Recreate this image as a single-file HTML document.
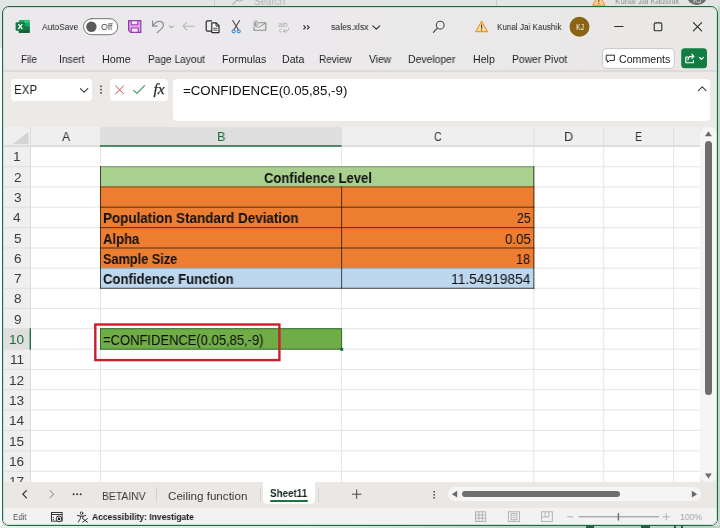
<!DOCTYPE html>
<html lang="en"><head><meta charset="utf-8"><title>sales.xlsx - Excel</title>
<style>
html,body{margin:0;padding:0;}
body{width:720px;height:528px;position:relative;overflow:hidden;background:#e3e4e4;font-family:"Liberation Sans",sans-serif;}
.a{position:absolute;display:block;}
.t{will-change:transform;position:absolute;display:block;white-space:nowrap;line-height:20px;height:20px;transform-origin:0 50%;z-index:5;}
svg{position:absolute;overflow:visible;}
#bgwin{position:absolute;left:0;top:0;width:720px;height:528px;overflow:hidden;}
#win{position:absolute;left:2px;top:6px;width:714px;height:518px;border:1px solid #206642;border-radius:7px;background:linear-gradient(90deg,#ece9ed 0,#ebe9eb 45%,#e9e8e6 100%);overflow:hidden;}
.gl{position:absolute;background:#e5e5e5;}
.cellb{position:absolute;box-sizing:border-box;}
#halo{position:absolute;left:2px;top:6px;width:714px;height:518px;border:1px solid transparent;border-radius:7px;box-shadow:inset 0 0 0 1px rgba(165,222,192,.6);z-index:9;pointer-events:none;}

</style></head>
<body>
<div id="bgwin">
<div class="a" style="left:687.3px;top:-14.4px;width:19.6px;height:19.8px;border-radius:10px;background:#6e6e6e"></div>
<span class="t" id="t57" style="left:254.30px;top:-9.40px;font-size:11.5px;font-weight:400;color:#b2b2b2;transform:scaleX(0.8518);z-index:0;">Search</span>
<span class="t" id="t58" style="left:615.00px;top:-8.80px;font-size:9.6px;font-weight:400;color:#909090;transform:scaleX(0.8435);z-index:0;">Kunal Jai Kaushik</span>
<span class="t" id="t59" style="left:693.00px;top:-9.10px;font-size:8.2px;font-weight:400;color:#e0e0e0;transform:scaleX(0.8984);z-index:0;">KJ</span>
</div>
<div class="a" style="left:0;top:48px;width:2px;height:480px;background:#fdfdfd"></div>
<div class="a" style="left:718px;top:6px;width:2px;height:522px;background:#c6d8c9"></div>
<div class="a" style="left:0;top:526px;width:720px;height:2px;background:linear-gradient(90deg,#e9ece9 0,#e4e9e4 40%,#bfd1c2 75%,#bfd1c2 100%)"></div>
<div class="a" style="left:586px;top:526px;width:8px;height:2px;background:#2c5a3c"></div>
<div class="a" style="left:641px;top:526px;width:9px;height:2px;background:#2c5a3c"></div>
<div class="a" style="left:674px;top:526px;width:2px;height:2px;background:#2c5a3c"></div>
<div class="a" style="left:681px;top:526px;width:2px;height:2px;background:#2c5a3c"></div>
<svg style="left:0;top:0" width="720" height="8" viewBox="0 0 720 8"><path d="M598.8 -6 L605 5.2 H592.6 Z" fill="#f6d28a" stroke="#dd9a3c" stroke-width="1"/><path d="M598.8 -2 V2" stroke="#555" stroke-width="1.1"/><circle cx="598.8" cy="3.6" r="0.6" fill="#555"/></svg>
<svg style="left:0;top:0" width="720" height="8" viewBox="0 0 720 8" fill="none"><path d="M232.6 4.6 L237 0.2" stroke="#b0b0b0" stroke-width="1.1"/><circle cx="239.6" cy="-2.4" r="3.6" stroke="#b0b0b0" stroke-width="1"/></svg>
<div class="a" style="left:214px;top:0;width:1px;height:6px;background:#cdcdcd"></div>
<div class="a" style="left:496px;top:0;width:1px;height:6px;background:#cdcdcd"></div>
<div id="win">
  <!-- ribbon / formula zone backgrounds (coords relative to win: subtract 3,7) -->
  <div class="a" style="left:0;top:64px;width:714px;height:57px;background:#ece9e7"></div>
  <div class="a" style="left:0;top:63px;width:714px;height:2px;background:#dddadb"></div>
  <div class="a" style="left:0;top:475px;width:714px;height:27px;background:#ebe7e5"></div>
  <div class="a" style="left:0;top:502px;width:714px;height:17px;background:#f3f2f2"></div>
</div>
<!-- everything below in page coordinates -->
<!-- name box, fx box, formula input -->
<div class="a" style="left:10.5px;top:79px;width:81.5px;height:22px;background:#fff;border-radius:4px"></div>
<div class="a" style="left:109.5px;top:79px;width:58.5px;height:22px;background:#fff;border-radius:4px"></div>
<div class="a" style="left:173px;top:78.5px;width:537px;height:42.8px;background:#fff;border-radius:4px"></div>
<!-- grid -->
<div id="grid" class="a" style="left:3px;top:127px;width:697px;height:355px;background:#fff;overflow:hidden">
</div>
<svg style="left:0;top:0;z-index:1" width="720" height="528" viewBox="0 0 720 528" shape-rendering="auto">
<rect x="3" y="127" width="697" height="19.6" fill="#efefef"/>
<rect x="3" y="127" width="27.5" height="355" fill="#efefef"/>
<rect x="101.0" y="127" width="240.60" height="19.2" fill="#dfdfdf"/>
<rect x="3" y="329.20" width="27" height="19.50" fill="#dfdfdf"/>
<rect x="3" y="145.60" width="697" height="1" fill="#cbcbcb"/>
<rect x="30.0" y="127" width="1" height="355" fill="#dadada"/>
<rect x="100.00" y="128" width="1" height="18" fill="#dedede"/>
<rect x="341.10" y="128" width="1" height="18" fill="#dedede"/>
<rect x="533.30" y="128" width="1" height="18" fill="#dedede"/>
<rect x="603.20" y="128" width="1" height="18" fill="#dedede"/>
<rect x="673.10" y="128" width="1" height="18" fill="#dedede"/>
<path d="M28.5 131.8 V144.2 H12.4 Z" fill="#d4d4d4"/>
<rect x="100.00" y="147" width="1" height="335" fill="#e5e5e5"/>
<rect x="341.10" y="147" width="1" height="335" fill="#e5e5e5"/>
<rect x="533.30" y="147" width="1" height="335" fill="#e5e5e5"/>
<rect x="603.20" y="147" width="1" height="335" fill="#e5e5e5"/>
<rect x="673.10" y="147" width="1" height="335" fill="#e5e5e5"/>
<rect x="31" y="166.25" width="669" height="1" fill="#e5e5e5"/>
<rect x="3" y="166.25" width="27.5" height="1" fill="#dfdfdf"/>
<rect x="31" y="186.40" width="669" height="1" fill="#e5e5e5"/>
<rect x="3" y="186.40" width="27.5" height="1" fill="#dfdfdf"/>
<rect x="31" y="206.70" width="669" height="1" fill="#e5e5e5"/>
<rect x="3" y="206.70" width="27.5" height="1" fill="#dfdfdf"/>
<rect x="31" y="227.15" width="669" height="1" fill="#e5e5e5"/>
<rect x="3" y="227.15" width="27.5" height="1" fill="#dfdfdf"/>
<rect x="31" y="247.50" width="669" height="1" fill="#e5e5e5"/>
<rect x="3" y="247.50" width="27.5" height="1" fill="#dfdfdf"/>
<rect x="31" y="267.65" width="669" height="1" fill="#e5e5e5"/>
<rect x="3" y="267.65" width="27.5" height="1" fill="#dfdfdf"/>
<rect x="31" y="287.75" width="669" height="1" fill="#e5e5e5"/>
<rect x="3" y="287.75" width="27.5" height="1" fill="#dfdfdf"/>
<rect x="31" y="308.05" width="669" height="1" fill="#e5e5e5"/>
<rect x="3" y="308.05" width="27.5" height="1" fill="#dfdfdf"/>
<rect x="31" y="328.20" width="669" height="1" fill="#e5e5e5"/>
<rect x="3" y="328.20" width="27.5" height="1" fill="#dfdfdf"/>
<rect x="31" y="348.70" width="669" height="1" fill="#e5e5e5"/>
<rect x="3" y="348.70" width="27.5" height="1" fill="#dfdfdf"/>
<rect x="31" y="368.95" width="669" height="1" fill="#e5e5e5"/>
<rect x="3" y="368.95" width="27.5" height="1" fill="#dfdfdf"/>
<rect x="31" y="389.20" width="669" height="1" fill="#e5e5e5"/>
<rect x="3" y="389.20" width="27.5" height="1" fill="#dfdfdf"/>
<rect x="31" y="409.50" width="669" height="1" fill="#e5e5e5"/>
<rect x="3" y="409.50" width="27.5" height="1" fill="#dfdfdf"/>
<rect x="31" y="429.85" width="669" height="1" fill="#e5e5e5"/>
<rect x="3" y="429.85" width="27.5" height="1" fill="#dfdfdf"/>
<rect x="31" y="450.30" width="669" height="1" fill="#e5e5e5"/>
<rect x="3" y="450.30" width="27.5" height="1" fill="#dfdfdf"/>
<rect x="31" y="470.80" width="669" height="1" fill="#e5e5e5"/>
<rect x="3" y="470.80" width="27.5" height="1" fill="#dfdfdf"/>
<rect x="100.00" y="145.25" width="241.60" height="1.45" fill="#1f6a40"/>
<rect x="29.60" y="328.20" width="1.4" height="21.50" fill="#1f7145"/>
<rect x="100.00" y="166.25" width="434.30" height="21.15" fill="#a9d08e"/>
<rect x="100.00" y="186.40" width="434.30" height="21.30" fill="#ed7d31"/>
<rect x="100.00" y="206.70" width="434.30" height="21.45" fill="#ed7d31"/>
<rect x="100.00" y="227.15" width="434.30" height="21.35" fill="#ed7d31"/>
<rect x="100.00" y="247.50" width="434.30" height="21.15" fill="#ed7d31"/>
<rect x="100.00" y="267.65" width="434.30" height="21.10" fill="#bdd7ee"/>
<rect x="100.00" y="166.25" width="434.30" height="1" fill="rgba(70,85,60,.5)"/>
<rect x="100.00" y="186.40" width="434.30" height="1" fill="rgba(60,40,20,.62)"/>
<rect x="100.00" y="206.70" width="434.30" height="1" fill="rgba(35,25,15,.78)"/>
<rect x="100.00" y="227.15" width="434.30" height="1" fill="rgba(35,25,15,.78)"/>
<rect x="100.00" y="247.50" width="434.30" height="1" fill="rgba(35,25,15,.78)"/>
<rect x="100.00" y="267.65" width="434.30" height="1" fill="rgba(70,55,40,.4)"/>
<rect x="100.00" y="287.75" width="434.30" height="1" fill="rgba(30,30,30,.8)"/>
<rect x="100.00" y="166.25" width="1" height="122.50" fill="rgba(35,25,15,.78)"/>
<rect x="533.30" y="166.25" width="1" height="122.50" fill="rgba(35,25,15,.78)"/>
<rect x="341.10" y="186.40" width="1" height="102.35" fill="rgba(35,25,15,.78)"/>
<rect x="100.50" y="328.70" width="241.10" height="20.50" fill="#70ad47" stroke="#2f6b30" stroke-width="1"/>
<rect x="340.20" y="347.80" width="3" height="3" fill="#1f6a3a"/>
<rect x="95.3" y="324.5" width="184.1" height="35.6" fill="none" stroke="#c9202f" stroke-width="2.4"/>
</svg>
<div id="halo"></div>
<svg style="left:0;top:0;z-index:4" width="720" height="528" viewBox="0 0 720 528" fill="none" stroke-linecap="round" stroke-linejoin="round">
  <!-- Excel logo -->
  <rect x="18.8" y="19.9" width="10.9" height="13" rx="1.2" fill="#21a366" stroke="none"/>
  <rect x="24.2" y="19.9" width="5.5" height="3.3" fill="#33c481" stroke="none"/>
  <rect x="24.2" y="23.2" width="5.5" height="3.2" fill="#21a366" stroke="none"/>
  <rect x="24.2" y="26.4" width="5.5" height="3.2" fill="#107c41" stroke="none"/>
  <rect x="18.8" y="26.4" width="5.4" height="3.2" fill="#185c37" stroke="none"/>
  <rect x="18.8" y="29.6" width="10.9" height="3.3" fill="#185c37" stroke="none"/>
  <rect x="15.6" y="22.3" width="9.4" height="8.5" rx="1" fill="#107c41" stroke="none"/>
  <path d="M18.3 24.1 L22.3 29 M22.3 24.1 L18.3 29" stroke="#fff" stroke-width="1.25" stroke-linecap="butt"/>
  <!-- autosave toggle -->
  <rect x="83.5" y="18.7" width="34.2" height="16" rx="8" fill="#fff" stroke="#646464" stroke-width="0.9"/>
  <circle cx="91.4" cy="26.7" r="5.2" fill="#5a5a5a" stroke="none"/>
  <!-- save -->
  <path d="M128.6 20.6 H140.8 V32.4 H130.6 L128.6 30.4 Z" fill="#dfa9e8" stroke="#9236ab" stroke-width="1.2"/>
  <rect x="131.2" y="20.6" width="6.6" height="4.2" fill="#f4e4f7" stroke="#9a3db3" stroke-width="1.1"/>
  <rect x="131.2" y="28" width="7" height="4.4" fill="#f4e4f7" stroke="#9a3db3" stroke-width="1.1"/>
  <!-- undo -->
  <path d="M152.6 21.2 V26 H157.4 M152.8 25.8 C155 22.6 158.4 20.6 161.2 21.6 C164.2 22.8 164 26.4 161.6 28.6 L157.2 32.6" stroke="#8d8d8d" stroke-width="1.25"/>
  <path d="M169.4 25.8 L171.4 27.8 L173.4 25.8" stroke="#a8a8a8" stroke-width="1.05"/>
  <!-- redo (disabled arrow) -->
  <path d="M194.6 26.2 H183 M186.8 22.4 L183 26.2 L186.8 30" stroke="#b9b9b9" stroke-width="1.1"/>
  <!-- copy/paste -->
  <path d="M211.2 31.2 H207.4 C206.6 31.2 206.2 30.8 206.2 30 V22 C206.2 21.2 206.6 20.8 207.4 20.8 H211.6" stroke="#2b2b2b" stroke-width="1.2"/>
  <path d="M211.8 22.9 H216.2 L219 25.7 V32.6 H211.8 Z" fill="#fff" stroke="#2b2b2b" stroke-width="1.2"/>
  <path d="M216 23 V26 H219" stroke="#2b2b2b" stroke-width="1"/>
  <path d="M213.6 28.2 H217.2 M213.6 30.2 H217.2" stroke="#2b2b2b" stroke-width="0.9"/>
  <!-- scissors -->
  <path d="M232.7 20.5 L238.5 30 M239.6 20.5 L233.8 30" stroke="#4a4a4a" stroke-width="1.1"/>
  <circle cx="233.6" cy="31.3" r="1.55" stroke="#3a96dd" stroke-width="1.15"/>
  <circle cx="238.7" cy="31.3" r="1.55" stroke="#3a96dd" stroke-width="1.15"/>
  <!-- mail attach -->
  <path d="M258.8 22.8 H265.8 V30.2 H254 V27.2" stroke="#8d8d8d" stroke-width="1.1"/>
  <path d="M258.6 27.4 L265.6 23" stroke="#8d8d8d" stroke-width="1"/>
  <path d="M254.2 25.8 V22.2 C254.2 20.2 257.2 20.2 257.2 22.2 V26.2 C257.2 27.4 255.6 27.4 255.6 26.2 V22.6" stroke="#8d8d8d" stroke-width="0.9"/>
  <!-- abc replace lower arrows -->
  <path d="M281.2 29 C279.2 28.6 278.6 31.8 281.2 32.2" stroke="#ababab" stroke-width="0.9"/>
  <path d="M288.6 28.2 C288.8 30.6 287.6 31.2 283.4 31.2 M285.2 29.4 L283.4 31.2 L285.2 32.8" stroke="#ababab" stroke-width="0.9"/>
  <!-- >> -->
  <path d="M303.8 25.6 L305.6 27.3 L303.8 29 M307.4 25.6 L309.2 27.3 L307.4 29" stroke="#2b2b2b" stroke-width="1.1"/>
  <!-- filename chevron -->
  <path d="M372.8 25.8 L376.3 29.2 L379.8 25.8" stroke="#2b2b2b" stroke-width="1.1"/>
  <!-- search -->
  <circle cx="440.2" cy="25.2" r="3.9" stroke="#4a4a4a" stroke-width="1.1"/>
  <path d="M437.4 28.2 L433.4 32.4" stroke="#4a4a4a" stroke-width="1.2"/>
  <!-- warning -->
  <path d="M481.6 21.2 L487.4 31.6 H475.8 Z" fill="#fbdc9c" stroke="#e8962e" stroke-width="1.1"/>
  <path d="M481.6 24.6 V28.4" stroke="#3a3a3a" stroke-width="1.1" stroke-linecap="butt"/>
  <circle cx="481.6" cy="30" r="0.65" fill="#3a3a3a" stroke="none"/>
  <!-- avatar -->
  <circle cx="579.5" cy="26.7" r="10" fill="#8a6413" stroke="none"/>
  <!-- window controls -->
  <path d="M614.6 26.5 H623" stroke="#2b2b2b" stroke-width="1.1"/>
  <rect x="654.2" y="22.9" width="7.6" height="7.8" rx="1.3" stroke="#2b2b2b" stroke-width="1.1"/>
  <path d="M693.4 22.7 L701.6 30.9 M701.6 22.7 L693.4 30.9" stroke="#2b2b2b" stroke-width="1.1"/>
  <!-- comments button -->
  <rect x="602.5" y="48.6" width="71.8" height="19.8" rx="3.5" fill="#fff" stroke="#c9c7c6" stroke-width="1"/>
  <path d="M606.6 55.2 H614.4 V60.4 H609.6 L607.6 62.4 V60.4 H606.6 Z" stroke="#2b2b2b" stroke-width="1"/>
  <!-- share button -->
  <rect x="681.2" y="48.3" width="25.8" height="20" rx="3.5" fill="#127c43" stroke="none"/>
  <path d="M687.6 57 H685.8 V62.8 H693.4 V60.6" stroke="#fff" stroke-width="1.1"/>
  <path d="M688 60 C688 57.6 689.4 56.4 691.6 56.4 H693.6 M691.8 54.2 L694 56.4 L691.8 58.6" stroke="#fff" stroke-width="1.1"/>
  <path d="M699.4 57.4 L701.4 59.4 L703.4 57.4" stroke="#fff" stroke-width="1.2"/>
  <!-- name box chevron -->
  <path d="M80.4 88.6 L84.1 92.2 L87.8 88.6" stroke="#3a3a3a" stroke-width="1.1"/>
  <!-- dots -->
  <g fill="#444" stroke="none"><rect x="100.2" y="85.5" width="1.6" height="1.6"/><rect x="100.2" y="88.8" width="1.6" height="1.6"/><rect x="100.2" y="92.1" width="1.6" height="1.6"/></g>
  <!-- cancel / enter -->
  <path d="M115.3 85.6 L123.9 94.1 M123.9 85.6 L115.3 94.1" stroke="#cf4c4c" stroke-width="1" stroke-linecap="butt"/>
  <path d="M133.4 90.2 L136.9 93.3 L144.8 85.3" stroke="#3b8a57" stroke-width="1.05" stroke-linecap="butt"/>
  <!-- formula collapse chevron -->
  <path d="M698.4 90.6 L702.2 86.8 L706 90.6" stroke="#3a3a3a" stroke-width="1.1"/>
  <!-- sheet nav -->
  <path d="M26.4 490.6 L22.8 494.2 L26.4 497.8" stroke="#2b2b2b" stroke-width="1.2"/>
  <path d="M50 490.6 L53.6 494.2 L50 497.8" stroke="#a0a0a0" stroke-width="1.1"/>
  <g fill="#333" stroke="none"><circle cx="73.6" cy="494.2" r="1"/><circle cx="77.1" cy="494.2" r="1"/><circle cx="80.6" cy="494.2" r="1"/></g>
  <!-- tab separators -->
  <path d="M156.5 488 V501" stroke="#d2cfcd" stroke-width="1"/>
  <!-- plus -->
  <path d="M352.4 494.2 H361 M356.7 489.9 V498.5" stroke="#444" stroke-width="1"/>
  <!-- hscroll grip dots -->
  <g fill="#444" stroke="none"><rect x="433.4" y="491" width="1.5" height="1.5"/><rect x="433.4" y="494" width="1.5" height="1.5"/><rect x="433.4" y="497" width="1.5" height="1.5"/></g>
  <!-- status icons -->
  <rect x="51.5" y="512.5" width="10.6" height="8.6" fill="#fbfbfb" stroke="#333" stroke-width="1" stroke-linejoin="miter"/>
  <path d="M51.5 514.5 H62" stroke="#333" stroke-width="1" stroke-linecap="butt"/>
  <circle cx="59" cy="518.9" r="2.9" fill="#f6f6f6" stroke="#333" stroke-width="1"/>
  <circle cx="59" cy="518.9" r="1.3" fill="#222" stroke="none"/>
  <rect x="52.8" y="516.8" width="1.1" height="1.1" fill="#333" stroke="none"/><rect x="52.8" y="518.9" width="1.1" height="1.1" fill="#333" stroke="none"/>
  <!-- accessibility -->
  <circle cx="81.6" cy="513.2" r="1.3" stroke="#2b2b2b" stroke-width="0.9"/>
  <path d="M77.4 515.4 L80.4 516.2 H82.8 L85.8 515.4 M80.4 516.2 V518.6 L78.4 522 M82.8 516.2 V518.2" stroke="#2b2b2b" stroke-width="0.95"/>
  <path d="M82.6 518.6 L87.4 522.2 M87.4 518.6 L82.6 522.2" stroke="#2b2b2b" stroke-width="0.95"/>
  <!-- view icons -->
  <g stroke="#adadad" stroke-width="0.9" stroke-linejoin="miter" stroke-linecap="butt">
    <rect x="475.5" y="511.8" width="10.2" height="9.6"/>
    <path d="M475.5 515 H485.7 M475.5 518.2 H485.7 M478.9 511.8 V521.4 M482.3 511.8 V521.4"/>
    <rect x="508.4" y="511.8" width="11" height="9.6"/>
    <rect x="511.2" y="513.6" width="5.6" height="6.2"/>
    <path d="M512.6 515.6 H515.4 M512.6 517.6 H515.4"/>
    <rect x="541.5" y="511.8" width="10.8" height="9.6"/>
    <path d="M545.2 511.8 V517 M548.9 511.8 V517 M541.5 517 H548.9"/>
  </g>
  <!-- zoom slider -->
  <path d="M567.6 516.8 H573" stroke="#b0b0b0" stroke-width="1"/>
  <path d="M579 516.8 H658.6" stroke="#909090" stroke-width="1"/>
  <path d="M618.4 513.8 V520" stroke="#6a6a6a" stroke-width="1.4"/>
  <path d="M663 516.8 H669.4 M666.2 513.6 V520" stroke="#b0b0b0" stroke-width="1"/>
</svg>

<span class="t" id="t0" style="left:42.00px;top:17.20px;font-size:9.4px;font-weight:400;color:#262626;transform:scaleX(0.8902);">AutoSave</span>
<span class="t" id="t1" style="left:101.00px;top:17.10px;font-size:9.3px;font-weight:400;color:#3a3a3a;transform:scaleX(0.9331);">Off</span>
<span class="t" id="t2" style="left:330.60px;top:17.20px;font-size:9.6px;font-weight:400;color:#262626;transform:scaleX(0.9046);">sales.xlsx</span>
<span class="t" id="t3" style="left:497.30px;top:17.00px;font-size:9.7px;font-weight:400;color:#262626;transform:scaleX(0.8359);">Kunal Jai Kaushik</span>
<span class="t" id="t4" style="left:575.60px;top:17.00px;font-size:8.4px;font-weight:400;color:rgba(255,255,255,.92);transform:scaleX(0.8345);">KJ</span>
<span class="t" id="t5" style="left:21.00px;top:49.40px;font-size:10.6px;font-weight:400;color:#1f1f1f;transform:scaleX(0.9314);">File</span>
<span class="t" id="t6" style="left:59.40px;top:49.40px;font-size:10.6px;font-weight:400;color:#1f1f1f;transform:scaleX(0.9642);">Insert</span>
<span class="t" id="t7" style="left:102.00px;top:49.40px;font-size:10.6px;font-weight:400;color:#1f1f1f;transform:scaleX(1.0223);">Home</span>
<span class="t" id="t8" style="left:148.00px;top:49.40px;font-size:10.6px;font-weight:400;color:#1f1f1f;transform:scaleX(0.9572);">Page Layout</span>
<span class="t" id="t9" style="left:222.00px;top:49.40px;font-size:10.6px;font-weight:400;color:#1f1f1f;transform:scaleX(1.0034);">Formulas</span>
<span class="t" id="t10" style="left:282.00px;top:49.40px;font-size:10.6px;font-weight:400;color:#1f1f1f;transform:scaleX(0.9784);">Data</span>
<span class="t" id="t11" style="left:319.00px;top:49.40px;font-size:10.6px;font-weight:400;color:#1f1f1f;transform:scaleX(0.9406);">Review</span>
<span class="t" id="t12" style="left:368.70px;top:49.40px;font-size:10.6px;font-weight:400;color:#1f1f1f;transform:scaleX(0.9732);">View</span>
<span class="t" id="t13" style="left:407.50px;top:49.40px;font-size:10.6px;font-weight:400;color:#1f1f1f;transform:scaleX(0.9844);">Developer</span>
<span class="t" id="t14" style="left:472.50px;top:49.40px;font-size:10.6px;font-weight:400;color:#1f1f1f;transform:scaleX(1.0048);">Help</span>
<span class="t" id="t15" style="left:511.50px;top:49.40px;font-size:10.6px;font-weight:400;color:#1f1f1f;transform:scaleX(0.9756);">Power Pivot</span>
<span class="t" id="t16" style="left:619.00px;top:49.20px;font-size:10.6px;font-weight:400;color:#222;transform:scaleX(1.0016);">Comments</span>
<span class="t" id="t17" style="left:13.52px;top:80.20px;font-size:13.1px;font-weight:400;color:#1f1f1f;transform:scaleX(0.8835);">EXP</span>
<span class="t" id="t18" style="left:183.00px;top:80.80px;font-size:13.0px;font-weight:400;color:#111;transform:scaleX(1.0224);">=CONFIDENCE(0.05,85,-9)</span>
<span class="t" id="t19" style="left:61.60px;top:127.30px;font-size:13.6px;font-weight:400;color:#333;transform:scaleX(0.9000);">A</span>
<span class="t" id="t20" style="left:434.40px;top:127.30px;font-size:13.6px;font-weight:400;color:#333;transform:scaleX(0.7900);">C</span>
<span class="t" id="t21" style="left:563.87px;top:127.30px;font-size:13.6px;font-weight:400;color:#333;transform:scaleX(0.9333);">D</span>
<span class="t" id="t22" style="left:634.81px;top:127.30px;font-size:13.6px;font-weight:400;color:#333;transform:scaleX(0.7875);">E</span>
<span class="t" id="t23" style="left:216.88px;top:127.30px;font-size:13.6px;font-weight:400;color:#1e6b3c;transform:scaleX(0.9250);">B</span>
<span class="t" id="t24" style="left:13.12px;top:147.38px;font-size:13.6px;font-weight:400;color:#3b3b3b;transform:scaleX(0.9700);z-index:2;">1</span>
<span class="t" id="t25" style="left:13.61px;top:167.78px;font-size:13.6px;font-weight:400;color:#3b3b3b;transform:scaleX(0.9700);z-index:2;">2</span>
<span class="t" id="t26" style="left:13.61px;top:188.00px;font-size:13.6px;font-weight:400;color:#3b3b3b;transform:scaleX(0.9700);z-index:2;">3</span>
<span class="t" id="t27" style="left:13.12px;top:208.38px;font-size:13.6px;font-weight:400;color:#3b3b3b;transform:scaleX(0.9700);z-index:2;">4</span>
<span class="t" id="t28" style="left:13.61px;top:228.78px;font-size:13.6px;font-weight:400;color:#3b3b3b;transform:scaleX(0.9700);z-index:2;">5</span>
<span class="t" id="t29" style="left:13.61px;top:249.02px;font-size:13.6px;font-weight:400;color:#3b3b3b;transform:scaleX(0.9700);z-index:2;">6</span>
<span class="t" id="t30" style="left:13.61px;top:269.15px;font-size:13.6px;font-weight:400;color:#3b3b3b;transform:scaleX(0.9700);z-index:2;">7</span>
<span class="t" id="t31" style="left:13.61px;top:289.35px;font-size:13.6px;font-weight:400;color:#3b3b3b;transform:scaleX(0.9700);z-index:2;">8</span>
<span class="t" id="t32" style="left:13.61px;top:309.57px;font-size:13.6px;font-weight:400;color:#3b3b3b;transform:scaleX(0.9700);z-index:2;">9</span>
<span class="t" id="t33" style="left:8.97px;top:329.90px;font-size:13.6px;font-weight:400;color:#1e6b3c;transform:scaleX(0.9700);z-index:2;">10</span>
<span class="t" id="t34" style="left:9.94px;top:350.27px;font-size:13.6px;font-weight:400;color:#3b3b3b;transform:scaleX(0.9700);z-index:2;">11</span>
<span class="t" id="t35" style="left:9.45px;top:370.52px;font-size:13.6px;font-weight:400;color:#3b3b3b;transform:scaleX(0.9700);z-index:2;">12</span>
<span class="t" id="t36" style="left:9.45px;top:390.80px;font-size:13.6px;font-weight:400;color:#3b3b3b;transform:scaleX(0.9700);z-index:2;">13</span>
<span class="t" id="t37" style="left:8.97px;top:411.12px;font-size:13.6px;font-weight:400;color:#3b3b3b;transform:scaleX(0.9700);z-index:2;">14</span>
<span class="t" id="t38" style="left:9.45px;top:431.53px;font-size:13.6px;font-weight:400;color:#3b3b3b;transform:scaleX(0.9700);z-index:2;">15</span>
<span class="t" id="t39" style="left:9.45px;top:452.00px;font-size:13.6px;font-weight:400;color:#3b3b3b;transform:scaleX(0.9700);z-index:2;">16</span>
<span class="t" id="t40" style="left:9.45px;top:472.40px;font-size:13.6px;font-weight:400;color:#3b3b3b;transform:scaleX(0.9700);z-index:2;">17</span>
<span class="t" id="t41" style="left:264.00px;top:167.72px;font-size:13.9px;font-weight:700;color:#111;transform:scaleX(0.9373);">Confidence Level</span>
<span class="t" id="t42" style="left:103.00px;top:208.33px;font-size:13.9px;font-weight:700;color:#111;transform:scaleX(0.9667);">Population Standard Deviation</span>
<span class="t" id="t43" style="left:103.00px;top:228.72px;font-size:13.9px;font-weight:700;color:#111;transform:scaleX(0.9393);">Alpha</span>
<span class="t" id="t44" style="left:103.00px;top:248.97px;font-size:13.9px;font-weight:700;color:#111;transform:scaleX(0.9159);">Sample Size</span>
<span class="t" id="t45" style="left:103.00px;top:269.10px;font-size:13.9px;font-weight:700;color:#111;transform:scaleX(0.9445);">Confidence Function</span>
<span class="t" id="t46" style="left:516.80px;top:208.13px;font-size:14.4px;font-weight:400;color:#111;transform:scaleX(0.8498);">25</span>
<span class="t" id="t47" style="left:504.60px;top:228.53px;font-size:14.4px;font-weight:400;color:#111;transform:scaleX(0.9213);">0.05</span>
<span class="t" id="t48" style="left:516.32px;top:248.77px;font-size:14.4px;font-weight:400;color:#111;transform:scaleX(0.8798);">18</span>
<span class="t" id="t49" style="left:451.24px;top:268.90px;font-size:14.4px;font-weight:400;color:#111;transform:scaleX(0.9566);">11.54919854</span>
<span class="t" id="t50" style="left:103.00px;top:329.75px;font-size:14.6px;font-weight:400;color:#0c0c0c;transform:scaleX(0.8898);">=CONFIDENCE(0.05,85,-9)</span>
<span class="t" id="t51" style="left:101.50px;top:485.70px;font-size:11.4px;font-weight:400;color:#3a3a3a;transform:scaleX(0.9111);">BETAINV</span>
<span class="t" id="t52" style="left:168.00px;top:485.70px;font-size:11.4px;font-weight:400;color:#3a3a3a;transform:scaleX(1.0187);">Ceiling function</span>
<span class="t" id="t53" style="left:269.60px;top:483.00px;font-size:11.6px;font-weight:700;color:#14261b;transform:scaleX(0.8472);">Sheet11</span>
<span class="t" id="t54" style="left:13.00px;top:507.40px;font-size:9.3px;font-weight:400;color:#555;transform:scaleX(0.8396);">Edit</span>
<span class="t" id="t55" style="left:91.50px;top:507.20px;font-size:9.6px;font-weight:700;color:#1a1a1a;transform:scaleX(0.8880);">Accessibility: Investigate</span>
<span class="t" id="t56" style="left:680.00px;top:507.20px;font-size:9.2px;font-weight:400;color:#a5a5a5;transform:scaleX(0.9430);">100%</span>
<!-- bottom bars overlay (clips row 17) -->
<div class="a" style="left:3px;top:482.2px;width:714px;height:26px;background:#ebe7e5;z-index:3"></div>
<div class="a" style="left:3px;top:508px;width:714px;height:17px;background:#f3f2f2;z-index:3;border-radius:0 0 6px 6px"></div>
<!-- active sheet tab -->
<div class="a" style="left:263px;top:482px;width:52px;height:22.4px;background:#fff;border-radius:0 0 4.5px 4.5px;z-index:3"></div>
<div class="a" style="left:269.5px;top:500px;width:38px;height:2px;background:#1f7145;border-radius:1px;z-index:6"></div>
<div class="a" style="left:259.5px;top:488px;width:1px;height:14px;background:#d6d2d0;z-index:3"></div>
<div class="a" style="left:317.5px;top:488px;width:1px;height:14px;background:#d6d2d0;z-index:3"></div>
<!-- h scrollbar -->
<div class="a" style="left:448px;top:487.4px;width:253px;height:13.4px;background:#f6f5f5;border-radius:6.7px;z-index:3"></div>
<div class="a" style="left:461.8px;top:491.2px;width:158.4px;height:6px;background:#6e6e6e;border-radius:3px;z-index:4"></div>
<svg style="left:0;top:0;z-index:4" width="720" height="528" viewBox="0 0 720 528">
  <path d="M451.8 494.2 L457.2 490.8 V497.6 Z" fill="#6a6a6a"/>
  <path d="M697.2 494.2 L691.8 490.8 V497.6 Z" fill="#6a6a6a"/>
  <path d="M708.4 131.2 L711.9 136.2 H704.9 Z" fill="#6a6a6a"/>
  <path d="M708.4 478.4 L711.9 473.4 H704.9 Z" fill="#6a6a6a"/>
  <text x="278.2" y="27.2" font-family="Liberation Sans, sans-serif" font-size="7.4" fill="#ababab" textLength="9.4" lengthAdjust="spacingAndGlyphs">ab</text>
  <text x="153.4" y="94.2" font-family="Liberation Serif, serif" font-style="italic" font-size="14" fill="#2a2a2a" stroke="#2a2a2a" stroke-width="0.25" textLength="11.2" lengthAdjust="spacingAndGlyphs">fx</text>
</svg>
<!-- v scrollbar -->
<div class="a" style="left:700.4px;top:127px;width:16.6px;height:355px;background:#f6f5f5;border-radius:7px 7px 7px 7px;z-index:3"></div>
<div class="a" style="left:705.2px;top:141px;width:6.8px;height:253.5px;background:#6e6e6e;border-radius:3.5px;z-index:4"></div>

</body></html>
